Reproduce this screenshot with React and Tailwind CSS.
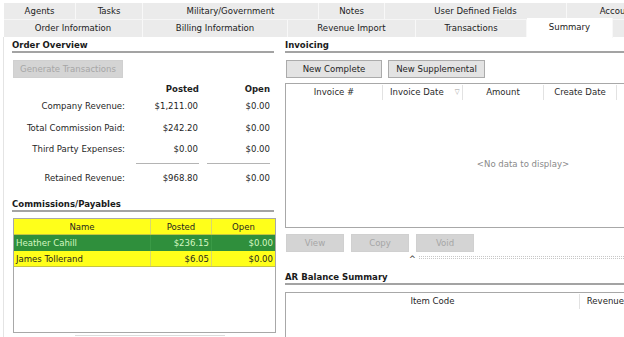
const row1 = [
  { label: 'Agents', w: 72 },
  { label: 'Tasks', w: 67 },
  { label: 'Military/Government', w: 176 },
  { label: 'Notes', w: 66 },
  { label: 'User Defined Fields', w: 182 },
  { label: 'Accounting', w: 114 },
];

const row2 = [
  { label: 'Order Information', w: 139 },
  { label: 'Billing Information', w: 145 },
  { label: 'Revenue Import', w: 128 },
  { label: 'Transactions', w: 111 },
  { label: 'Summary', w: 86, active: true },
  { label: '', w: 60 },
];

const overview = [
  { label: 'Company Revenue:', posted: '$1,211.00', open: '$0.00', mt: 'mt-[5px]' },
  { label: 'Total Commission Paid:', posted: '$242.20', open: '$0.00', mt: 'mt-[10px]' },
  { label: 'Third Party Expenses:', posted: '$0.00', open: '$0.00', mt: 'mt-[9px]' },
];

const Heading = ({ children, className = '' }) => (
  <div className={`shrink-0 font-bold text-[9.5px] leading-[12px] text-[#1a1a1a] border-b-2 border-[#a3a3a3] whitespace-nowrap ${className}`}>
    {children}
  </div>
);

const Btn = ({ children, disabled, className = '' }) => (
  <div
    className={`shrink-0 flex items-center justify-center whitespace-nowrap border ${
      disabled ? 'bg-[#d4d4d4] border-[#d0d0d0] text-[#a6a6a6]' : 'bg-[#e3e3e3] border-[#ababab] text-[#1f1f1f]'
    } ${className}`}
  >
    {children}
  </div>
);

export default function App() {
  return (
    <div className="w-[624px] h-[337px] overflow-hidden bg-white text-[#1f1f1f] text-[9.5px]" style={{ fontFamily: '"DejaVu Sans Condensed", "Liberation Sans", Arial, sans-serif' }}>
      {/* tab strip */}
      <div className="pt-[3px] pl-[4px] h-[37px]">
        <div className="flex h-[16px]">
          {row1.map((t) => (
            <div key={t.label} style={{ width: t.w }} className="shrink-0 flex items-center justify-center bg-[#ebebeb] border-r border-[#f8f8f8] whitespace-nowrap overflow-hidden text-[#222]">
              {t.label}
            </div>
          ))}
        </div>
        <div className="flex h-[18px] border-t border-[#f6f6f6]">
          {row2.map((t, i) => (
            <div
              key={i}
              style={{ width: t.w }}
              className={`shrink-0 flex items-center justify-center whitespace-nowrap border-r border-[#f8f8f8] text-[#222] ${
                t.active ? 'bg-white -mt-[2px] h-[20px] pb-[2px]' : 'bg-[#ebebeb]'
              }`}
            >
              {t.label}
            </div>
          ))}
        </div>
      </div>

      {/* content */}
      <div className="flex">
        {/* left column */}
        <div className="w-[280px] shrink-0 ml-[3px] border-l border-[#e4e4e4] pl-[8px] pt-[2px] flex flex-col">
          <Heading className="w-[262px]">Order Overview</Heading>
          <Btn disabled className="w-[110px] h-[18px] mt-[7px] ml-[1px]">Generate Transactions</Btn>

          <div className="flex leading-[12px] font-bold mt-[5px]">
            <div className="w-[113px]" />
            <div className="w-[74px] text-right">Posted</div>
            <div className="w-[71px] text-right">Open</div>
          </div>
          {overview.map((r) => (
            <div key={r.label} className={`flex leading-[12px] ${r.mt}`}>
              <div className="w-[113px] text-right whitespace-nowrap">{r.label}</div>
              <div className="w-[73px] text-right">{r.posted}</div>
              <div className="w-[72px] text-right">{r.open}</div>
            </div>
          ))}
          <div className="flex mt-[8px]">
            <div className="w-[124px]" />
            <div className="w-[63px] border-t border-[#b4b4b4]" />
            <div className="w-[8px]" />
            <div className="w-[63px] border-t border-[#b4b4b4]" />
          </div>
          <div className="flex leading-[12px] mt-[8px]">
            <div className="w-[113px] text-right">Retained Revenue:</div>
            <div className="w-[73px] text-right">$968.80</div>
            <div className="w-[72px] text-right">$0.00</div>
          </div>

          <Heading className="w-[262px] mt-[14px]">Commissions/Payables</Heading>
          <div className="shrink-0 w-[263px] h-[115px] mt-[6px] ml-[1px] border border-[#a8a8a8]">
            <div className="flex h-[16px] leading-[15px] bg-[#ffff1a] border-b border-[#c6c640]">
              <div className="w-[137px] text-center border-r border-[#d8d870]">Name</div>
              <div className="w-[61px] text-center border-r border-[#d8d870]">Posted</div>
              <div className="flex-1 text-center">Open</div>
            </div>
            <div className="flex h-[16px] leading-[16px] bg-[#2f8f3c] text-[#d6f7c0]">
              <div className="w-[137px] pl-[2px] border-r border-[#3a9a46]">Heather Cahill</div>
              <div className="w-[61px] pr-[2px] text-right border-r border-[#3a9a46]">$236.15</div>
              <div className="flex-1 pr-[2px] text-right">$0.00</div>
            </div>
            <div className="flex h-[16px] leading-[15px] bg-[#ffff1a] border-b border-[#c6c640]">
              <div className="w-[137px] pl-[2px] border-r border-[#d8d870]">James Tollerand</div>
              <div className="w-[61px] pr-[2px] text-right border-r border-[#d8d870]">$6.05</div>
              <div className="flex-1 pr-[2px] text-right">$0.00</div>
            </div>
          </div>
          <div className="shrink-0 ml-[63px] w-[150px] h-[3px] mt-[2px] border-t border-[#dcdcdc]" />
        </div>

        {/* right column */}
        <div className="flex-1 pl-[2px] pt-[2px] flex flex-col min-w-0">
          <Heading>Invoicing</Heading>
          <div className="flex gap-[6px] mt-[7px] ml-[1px]">
            <Btn className="w-[96px] h-[18px]">New Complete</Btn>
            <Btn className="w-[97px] h-[18px]">New Supplemental</Btn>
          </div>
          <div className="shrink-0 h-[145px] mt-[5px] border border-[#a8a8a8] border-r-0 flex flex-col">
            <div className="flex h-[17px] items-center text-[#2a2a2a] whitespace-nowrap">
              <div className="w-[97px] text-center border-r border-[#e2e2e2]">Invoice #</div>
              <div className="w-[80px] pl-[7px] flex items-center border-r border-[#e2e2e2]">
                <span>Invoice Date</span>
                <span className="ml-[11px] text-[7px] text-[#9a9a9a]">▽</span>
              </div>
              <div className="w-[81px] text-center border-r border-[#e2e2e2]">Amount</div>
              <div className="w-[73px] text-center border-r border-[#e2e2e2]">Create Date</div>
              <div className="flex-1" />
            </div>
            <div className="flex-1 flex items-center justify-center pl-[136px] text-[#8a8a8a]">&lt;No data to display&gt;</div>
          </div>
          <div className="flex gap-[7px] mt-[6px] ml-[1px]">
            <Btn disabled className="w-[58px] h-[18px]">View</Btn>
            <Btn disabled className="w-[58px] h-[18px]">Copy</Btn>
            <Btn disabled className="w-[58px] h-[18px]">Void</Btn>
          </div>
          <div className="shrink-0 flex items-center h-[8px] mt-[1px] ml-[124px]">
            <span className="text-[9px] leading-[8px] text-[#333] pt-[3px]">^</span>
            <div className="flex-1 ml-[3px] h-[3px] border-y border-dotted border-[#c8c8c8]" />
          </div>
          <Heading className="mt-[10px]">AR Balance Summary</Heading>
          <div className="shrink-0 h-[60px] mt-[7px] border border-[#a8a8a8] border-r-0">
            <div className="flex h-[17px] items-center whitespace-nowrap">
              <div className="w-[298px] text-center border-r border-[#e2e2e2]">Item Code</div>
              <div className="pl-[7px]">Revenue</div>
            </div>
          </div>
        </div>
      </div>
    </div>
  );
}
